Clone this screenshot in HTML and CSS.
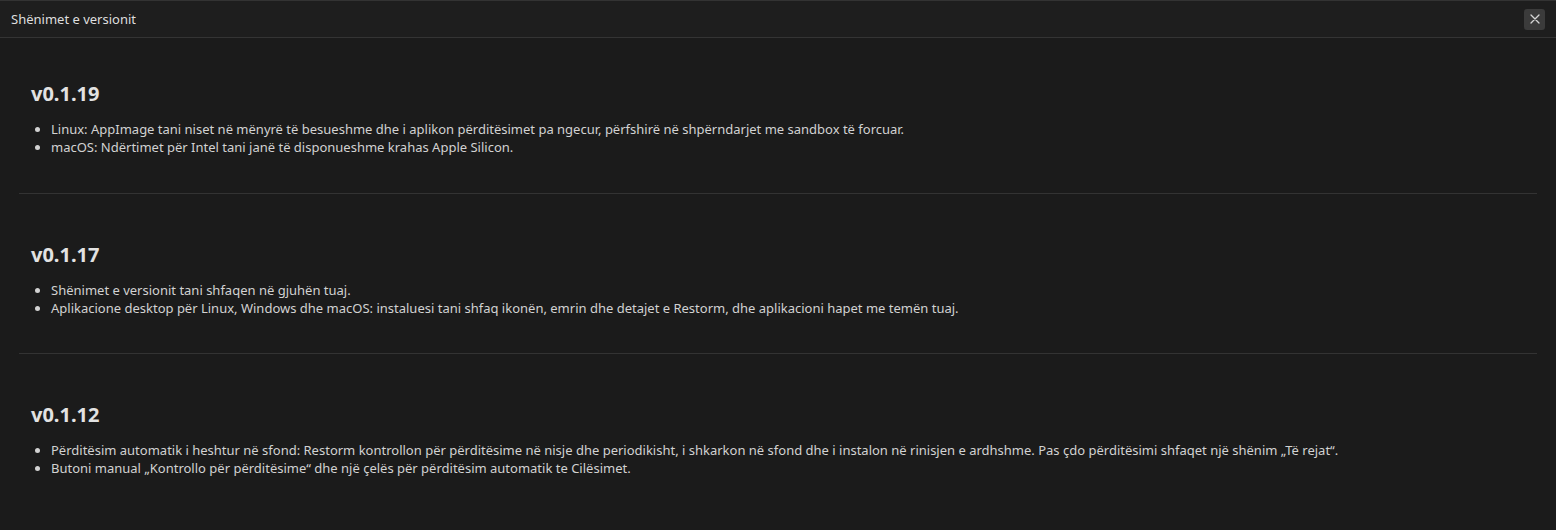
FILE: index.html
```html
<!DOCTYPE html>
<html lang="sq">
<head>
  <meta charset="UTF-8" />
  <meta name="viewport" content="width=device-width, initial-scale=1.0"/>
  <title>Shënimet e versionit</title>
  <link rel="stylesheet" href="styles.css">
</head>
<body>

<div class="dialog">
  <div class="dialog-header">
    <span class="dialog-title">Shënimet e versionit</span>
    <button class="close-btn" title="Mbyll">
      <svg width="10" height="10" viewBox="0 0 10 10"><path d="M1 1L9 9M9 1L1 9" stroke="#d6d6d6" stroke-width="1.3" stroke-linecap="round"/></svg>
    </button>
  </div>

  <div class="dialog-body">
    <section class="release">
      <h2>v0.1.19</h2>
      <ul>
        <li>Linux: AppImage tani niset në mënyrë të besueshme dhe i aplikon përditësimet pa ngecur, përfshirë në shpërndarjet me sandbox të forcuar.</li>
        <li>macOS: Ndërtimet për Intel tani janë të disponueshme krahas Apple Silicon.</li>
      </ul>
    </section>

    <section class="release">
      <h2>v0.1.17</h2>
      <ul>
        <li>Shënimet e versionit tani shfaqen në gjuhën tuaj.</li>
        <li>Aplikacione desktop për Linux, Windows dhe macOS: instaluesi tani shfaq ikonën, emrin dhe detajet e Restorm, dhe aplikacioni hapet me temën tuaj.</li>
      </ul>
    </section>

    <section class="release">
      <h2>v0.1.12</h2>
      <ul>
        <li>Përditësim automatik i heshtur në sfond: Restorm kontrollon për përditësime në nisje dhe periodikisht, i shkarkon në sfond dhe i instalon në rinisjen e ardhshme. Pas çdo përditësimi shfaqet një shënim „Të rejat“.</li>
        <li>Butoni manual „Kontrollo për përditësime“ dhe një çelës për përditësim automatik te Cilësimet.</li>
      </ul>
    </section>
  </div>
</div>

</body>
</html>
```

FILE: styles.css
```css
html, body {
  margin: 0;
  height: 100%;
}
body {
  font-family: "Noto Sans", "Open Sans", sans-serif;
  background-color: #1b1b1b;
  color: #d4d4d4;
}
.dialog {
  min-height: 100%;
  border-top: 1px solid #333;
  box-sizing: border-box;
}
.dialog-header {
  display: flex;
  align-items: center;
  justify-content: space-between;
  height: 36px;
  padding: 0 11px;
  background-color: #1e1e1e;
  border-bottom: 1px solid #343434;
}
.dialog-title {
  font-size: 13px;
  color: #dedede;
}
.close-btn {
  display: flex;
  align-items: center;
  justify-content: center;
  width: 21px;
  height: 21px;
  padding: 0;
  border: none;
  border-radius: 3px;
  background-color: #3b3b3b;
  cursor: pointer;
}
.dialog-body {
  padding: 0 19px;
}
.release {
  padding: 44px 12px 37px;
  border-bottom: 1px solid #333;
}
.release + .release { padding: 49px 12px 36px; }
.release:last-child { border-bottom: none; }
.release h2 {
  margin: 0 0 14px;
  font-size: 20px;
  line-height: 24px;
  font-weight: 700;
  color: #e2e2e2;
}
.release ul {
  margin: 0;
  padding-left: 20px;
}
.release li {
  font-size: 13px;
  line-height: 18px;
  color: #d2d2d2;
}
```
